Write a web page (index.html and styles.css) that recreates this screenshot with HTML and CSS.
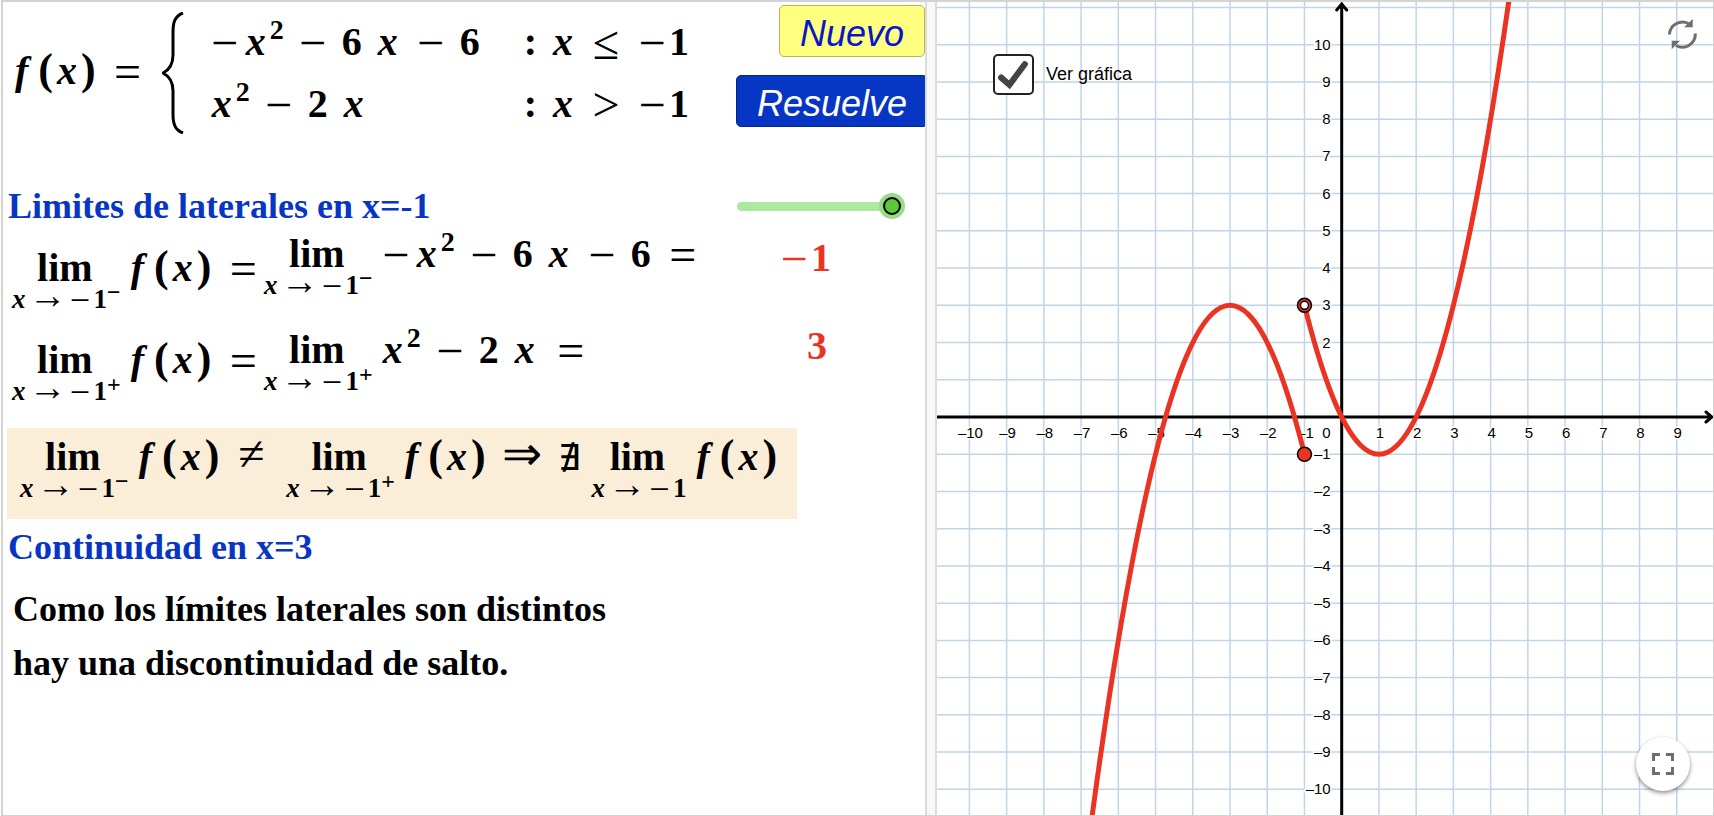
FILE: index.html
```html
<!DOCTYPE html>
<html lang="es">
<head>
  <meta charset="UTF-8" />
  <meta name="viewport" content="width=device-width, initial-scale=1" />
  <title>Límites laterales y continuidad</title>
  <link rel="stylesheet" href="styles.css">
</head>
<body>
  <main class="applet">
    <section class="work">
      <div class="top">
        <div class="math definition">
          <div class="lhs"><i class="fn">f</i><span class="par">(</span><i>x</i><span class="par">)</span><span class="op eq">=</span></div>
          <svg class="brace" width="22" height="122" viewBox="0 0 22 122" aria-hidden="true">
            <path d="M21 1 C13 4 11 10 11 20 V43 C11 53 7 58 1 61 C7 64 11 69 11 79 V102 C11 112 13 118 21 121" />
          </svg>
          <div class="cases">
            <div><span class="neg">−</span><i>x</i><sup>2</sup><span class="op">−</span>6<i class="coef">x</i><span class="op">−</span>6</div>
            <div><b>:</b><i class="coef">x</i><span class="op">≤</span><span class="neg">−</span>1</div>
            <div><i>x</i><sup>2</sup><span class="op">−</span>2<i class="coef">x</i></div>
            <div><b>:</b><i class="coef">x</i><span class="op">&gt;</span><span class="neg">−</span>1</div>
          </div>
        </div>
        <div class="buttons">
          <button type="button" class="btn-new">Nuevo</button>
          <button type="button" class="btn-solve">Resuelve</button>
        </div>
      </div>

      <div class="heading-row">
        <h2>Limites de laterales en x=-1</h2>
        <input type="range" id="steps" min="0" max="5" value="5" aria-label="Pasos" />
      </div>

      <div class="math limit-row left-limit">
        <div class="side">
          <span class="lim"><span>lim</span><small><i>x</i><span class="arrow">→</span><span class="neg">−</span>1<sup>−</sup></small></span>
          <span><i class="fn">f</i><span class="par">(</span><i>x</i><span class="par">)</span><span class="op eq">=</span></span>
        </div>
        <div class="expr">
          <span class="lim"><span>lim</span><small><i>x</i><span class="arrow">→</span><span class="neg">−</span>1<sup>−</sup></small></span>
          <span class="term"><span class="neg">−</span><i>x</i><sup>2</sup><span class="op">−</span>6<i class="coef">x</i><span class="op">−</span>6<span class="op eq">=</span></span>
        </div>
        <div class="answer"><span class="neg">−</span>1</div>
      </div>

      <div class="math limit-row right-limit">
        <div class="side">
          <span class="lim"><span>lim</span><small><i>x</i><span class="arrow">→</span><span class="neg">−</span>1<sup>+</sup></small></span>
          <span><i class="fn">f</i><span class="par">(</span><i>x</i><span class="par">)</span><span class="op eq">=</span></span>
        </div>
        <div class="expr">
          <span class="lim"><span>lim</span><small><i>x</i><span class="arrow">→</span><span class="neg">−</span>1<sup>+</sup></small></span>
          <span class="term"><i>x</i><sup>2</sup><span class="op">−</span>2<i class="coef">x</i><span class="op eq">=</span></span>
        </div>
        <div class="answer">3</div>
      </div>

      <div class="math conclusion">
        <span class="lim"><span>lim</span><small><i>x</i><span class="arrow">→</span><span class="neg">−</span>1<sup>−</sup></small></span>
        <span><i class="fn">f</i><span class="par">(</span><i>x</i><span class="par">)</span></span>
        <span class="op eq">≠</span>
        <span class="lim"><span>lim</span><small><i>x</i><span class="arrow">→</span><span class="neg">−</span>1<sup>+</sup></small></span>
        <span><i class="fn">f</i><span class="par">(</span><i>x</i><span class="par">)</span></span>
        <span class="op implies">⇒</span>
        <span class="notexists">∄</span>
        <span class="lim"><span>lim</span><small><i>x</i><span class="arrow">→</span><span class="neg">−</span>1</small></span>
        <span><i class="fn">f</i><span class="par">(</span><i>x</i><span class="par">)</span></span>
      </div>

      <h2>Continuidad en x=3</h2>
      <p class="result">Como los límites laterales son distintos<br />hay una discontinuidad de salto.</p>
    </section>

    <div class="splitter"></div>

    <section class="graph">
      <svg id="plot" class="plot" viewBox="0 0 776 813" preserveAspectRatio="xMidYMid slice" role="img" aria-label="Gráfica de f(x)"></svg>

      <label class="show-graph">
        <span class="box">
          <input type="checkbox" id="showGraph" checked />
          <svg viewBox="0 0 40 40" aria-hidden="true"><path d="M8 23 L16 30 L31 10" /></svg>
        </span>
        Ver gráfica
      </label>

      <button type="button" class="btn-reset" aria-label="Reiniciar">
        <svg width="32" height="32" viewBox="0 0 32 32" aria-hidden="true">
          <path class="arc" d="M3.500 16.500 A13 13 0 0 1 22.500 5.500 M29.300 15.500 A13 13 0 0 1 10 27.500" />
          <path class="head" d="M26.700 1 V9.300 H18 Z M5.700 22.700 H14 L5.700 31.300 Z" />
        </svg>
      </button>

      <button type="button" class="btn-full" aria-label="Pantalla completa">
        <svg width="22" height="22" viewBox="0 0 22 22" aria-hidden="true">
          <path d="M1.500 8 V1.500 H8 M14 1.500 H20.500 V8 M20.500 14 V20.500 H14 M8 20.500 H1.500 V14" />
        </svg>
      </button>
    </section>
  </main>

  <script src="graph.js"></script>
</body>
</html>
```
FILE: styles.css
```css
* {
  box-sizing: border-box;
}
body {
  margin: 0;
  background: #fff;
  color: #000;
  font-family: "Liberation Serif", "Times New Roman", serif;
}
.applet {
  display: grid;
  grid-template-columns: minmax(0, 922fr) 12px minmax(0, 776fr);
  min-height: 100vh;
  margin-left: 1px;
  border: 1px solid #d3d3d3;
  border-top-width: 2px;
  border-left-width: 2px;
}
.splitter {
  background: #f8f8f8;
  border: solid #dcdcdc;
  border-width: 0 2px;
}

/* left panel */
.work {
  overflow: hidden;
  padding-left: 4px;
}
h2 {
  margin: 0 1px;
  color: #0836c4;
  font-size: 36px;
  line-height: 40px;
}
.top {
  display: flex;
  justify-content: space-between;
  padding-top: 3px;
}
.math {
  font-size: 40px;
  font-weight: bold;
  line-height: 36px;
  white-space: nowrap;
}
.math i {
  margin: 0 4px;
}
.math .fn {
  margin: 0 10px;
}
.math .coef {
  margin-left: 16px;
}
.math sup {
  font-size: 28px;
  line-height: 0;
  vertical-align: 16px;
}
.par {
  font-size: 44px;
  line-height: 0;
}
.op, .neg {
  display: inline-block;
  width: 58px;
  font-size: 48px;
  font-weight: normal;
  line-height: 0;
  text-align: center;
  vertical-align: -4px;
}
.neg {
  width: 34px;
}
.op.eq {
  width: 64px;
}
.op.implies {
  width: 72px;
}
.definition {
  display: flex;
  align-items: center;
  padding-top: 6px;
}
.lhs {
  padding-bottom: 4px;
}
.lhs .fn {
  margin-left: 8px;
}
.brace {
  margin-left: 2px;
  margin-right: 24px;
}
.brace path {
  fill: none;
  stroke: #000;
  stroke-width: 3;
}
.cases {
  display: grid;
  grid-template-columns: auto auto;
  column-gap: 44px;
  line-height: 62px;
}
.buttons {
  display: flex;
  flex-direction: column;
  align-items: flex-start;
  gap: 18px;
  width: 189px;
}
.buttons button {
  height: 52px;
  padding: 6px 20px 0;
  border: 1px solid #b5b35a;
  border-radius: 5px;
  font: italic 36px "Liberation Sans", Arial, sans-serif;
  cursor: pointer;
}
.btn-new {
  align-self: flex-end;
  background: #ffff80;
  color: #0a14c8;
}
.buttons .btn-solve {
  background: #0836c4;
  border-color: #05267f;
  color: #fff;
}
.heading-row {
  display: flex;
  justify-content: space-between;
  align-items: center;
  margin-top: 51px;
  padding-right: 24px;
}
input[type="range"] {
  appearance: none;
  width: 164px;
  height: 9px;
  margin: 0;
  background: #ace8a0;
  border-radius: 5px;
}
input[type="range"]::-webkit-slider-thumb {
  appearance: none;
  width: 18px;
  height: 18px;
  background: #5bc83b;
  border: 2px solid #000;
  border-radius: 50%;
  box-shadow: 0 0 0 4px #97dd85;
}
.limit-row {
  display: flex;
  align-items: flex-start;
  height: 92px;
  padding-left: 2px;
}
.left-limit {
  margin-top: 10px;
}
.side, .expr, .conclusion {
  display: flex;
  align-items: baseline;
}
.side {
  width: 252px;
  padding-top: 14px;
}
.lim {
  display: inline-flex;
  flex-direction: column;
  align-items: center;
}
.lim small {
  font-size: 27px;
  line-height: 26px;
}
.lim small i {
  margin: 0 3px;
}
.lim small sup {
  font-size: 24px;
  vertical-align: 8px;
}
.lim small .neg {
  width: 27px;
  font-size: 36px;
}
.lim .arrow {
  font-size: 38px;
  font-weight: normal;
  line-height: 0;
}
.term {
  margin-left: 6px;
}
.answer {
  margin-left: auto;
  padding: 4px 94px 0 0;
  color: #eb3323;
}
.right-limit .expr {
  padding-top: 4px;
}
.right-limit .answer {
  padding: 0 98px 0 0;
}
.conclusion {
  width: 790px;
  height: 91px;
  margin: 8px 0;
  padding: 11px 10px;
  background: #fbeed8;
}
.notexists {
  margin-right: 8px;
  font: 36px "DejaVu Sans", sans-serif;
  line-height: 0;
}
.result {
  margin: 15px 6px;
  font-size: 36px;
  font-weight: bold;
  line-height: 54px;
}

/* right panel */
.graph {
  position: relative;
  overflow: hidden;
  font-family: "Liberation Sans", Arial, sans-serif;
}
.plot {
  position: absolute;
  width: 100%;
  height: 100%;
}
.grid {
  stroke: #c1d5e8;
  stroke-width: 1.5;
}
.axis {
  fill: none;
  stroke: #000;
  stroke-width: 3;
  stroke-linecap: round;
}
.tick {
  font-size: 15px;
  stroke: #fff;
  stroke-width: 3;
  paint-order: stroke;
}
.curve {
  fill: none;
  stroke: #eb3323;
  stroke-width: 5;
}
.point {
  fill: #eb3323;
  stroke: #000;
  stroke-width: 1.5;
}
.hole {
  fill: #fff;
  stroke: #000;
  stroke-width: 1.5;
}
.show-graph {
  position: absolute;
  top: 52px;
  left: 56px;
  display: flex;
  align-items: center;
  gap: 12px;
  font-size: 18px;
}
.box {
  position: relative;
  width: 41px;
  height: 41px;
}
.box input {
  appearance: none;
  display: block;
  width: 100%;
  height: 100%;
  margin: 0;
  background: #fff;
  border: 2px solid #222;
  border-radius: 5px;
}
.box svg {
  position: absolute;
  inset: 0;
  pointer-events: none;
}
.box path {
  fill: none;
  stroke: #444;
  stroke-width: 6;
  stroke-linecap: round;
}
.box input:not(:checked) + svg {
  display: none;
}
.btn-reset, .btn-full {
  position: absolute;
  padding: 0;
  border: none;
  background: none;
  cursor: pointer;
}
.btn-reset {
  top: 16px;
  right: 15px;
  height: 32px;
}
.arc {
  fill: none;
  stroke: #6e6e6e;
  stroke-width: 3;
}
.head {
  fill: #6e6e6e;
}
.btn-full {
  right: 23px;
  bottom: 24px;
  display: grid;
  place-items: center;
  width: 54px;
  height: 54px;
  border-radius: 50%;
  background: #fff;
  box-shadow: 0 2px 4px rgba(0, 0, 0, 0.45);
}
.btn-full path {
  fill: none;
  stroke: #6e6e6e;
  stroke-width: 3;
}
```
FILE: graph.js
```javascript
const NS = 'http://www.w3.org/2000/svg';
const plot = document.getElementById('plot');
const WIDTH = 776;
const HEIGHT = 813;
const UNIT = 37.23;
const ORIGIN = { x: 404.7, y: 415 };

const px = (x) => ORIGIN.x + x * UNIT;
const py = (y) => ORIGIN.y - y * UNIT;

function add(parent, name, attrs, text) {
  const el = document.createElementNS(NS, name);
  for (const key in attrs) el.setAttribute(key, attrs[key]);
  if (text !== undefined) el.textContent = text;
  parent.appendChild(el);
  return el;
}

// grid
for (let n = -10; n <= 11; n++) {
  add(plot, 'path', { class: 'grid', d: `M${px(n)} 0 V${HEIGHT}` });
  add(plot, 'path', { class: 'grid', d: `M0 ${py(n)} H${WIDTH}` });
}

// axes
add(plot, 'path', { class: 'axis', d: `M0 ${ORIGIN.y} H${WIDTH - 2} M${WIDTH - 7} ${ORIGIN.y - 5} l6 5 l-6 5` });
add(plot, 'path', { class: 'axis', d: `M${ORIGIN.x} ${HEIGHT} V3 M${ORIGIN.x - 5} 8 l5 -6 l5 6` });

// tick labels
const label = (n) => String(n).replace('-', '–');
for (let n = -10; n <= 9; n++) {
  if (n === 0) continue;
  add(plot, 'text', { class: 'tick', x: px(n) + 1, y: ORIGIN.y + 21, 'text-anchor': 'middle' }, label(n));
}
for (let n = -10; n <= 10; n++) {
  if (n === 1) continue;
  const y = n === 0 ? ORIGIN.y + 21 : py(n) + 5;
  add(plot, 'text', { class: 'tick', x: ORIGIN.x - 11, y: y, 'text-anchor': 'end' }, label(n));
}

// both branches are parabolas, so one quadratic segment each is exact
const curves = add(plot, 'g', { id: 'curves' });
function branch(f, df, a, b) {
  const m = (a + b) / 2;
  const c = f(a) + df(a) * (m - a);
  add(curves, 'path', { class: 'curve', d: `M${px(a)} ${py(f(a))} Q${px(m)} ${py(c)} ${px(b)} ${py(f(b))}` });
}
branch((x) => -x * x - 6 * x - 6, (x) => -2 * x - 6, -7, -1);
branch((x) => x * x - 2 * x, (x) => 2 * x - 2, -1, 5);
add(curves, 'circle', { class: 'point', cx: px(-1), cy: py(-1), r: 7 });
add(curves, 'circle', { class: 'point', cx: px(-1), cy: py(3), r: 7 });
add(curves, 'circle', { class: 'hole', cx: px(-1), cy: py(3), r: 4 });

document.getElementById('showGraph').addEventListener('change', (e) => {
  curves.style.display = e.target.checked ? '' : 'none';
});
```
